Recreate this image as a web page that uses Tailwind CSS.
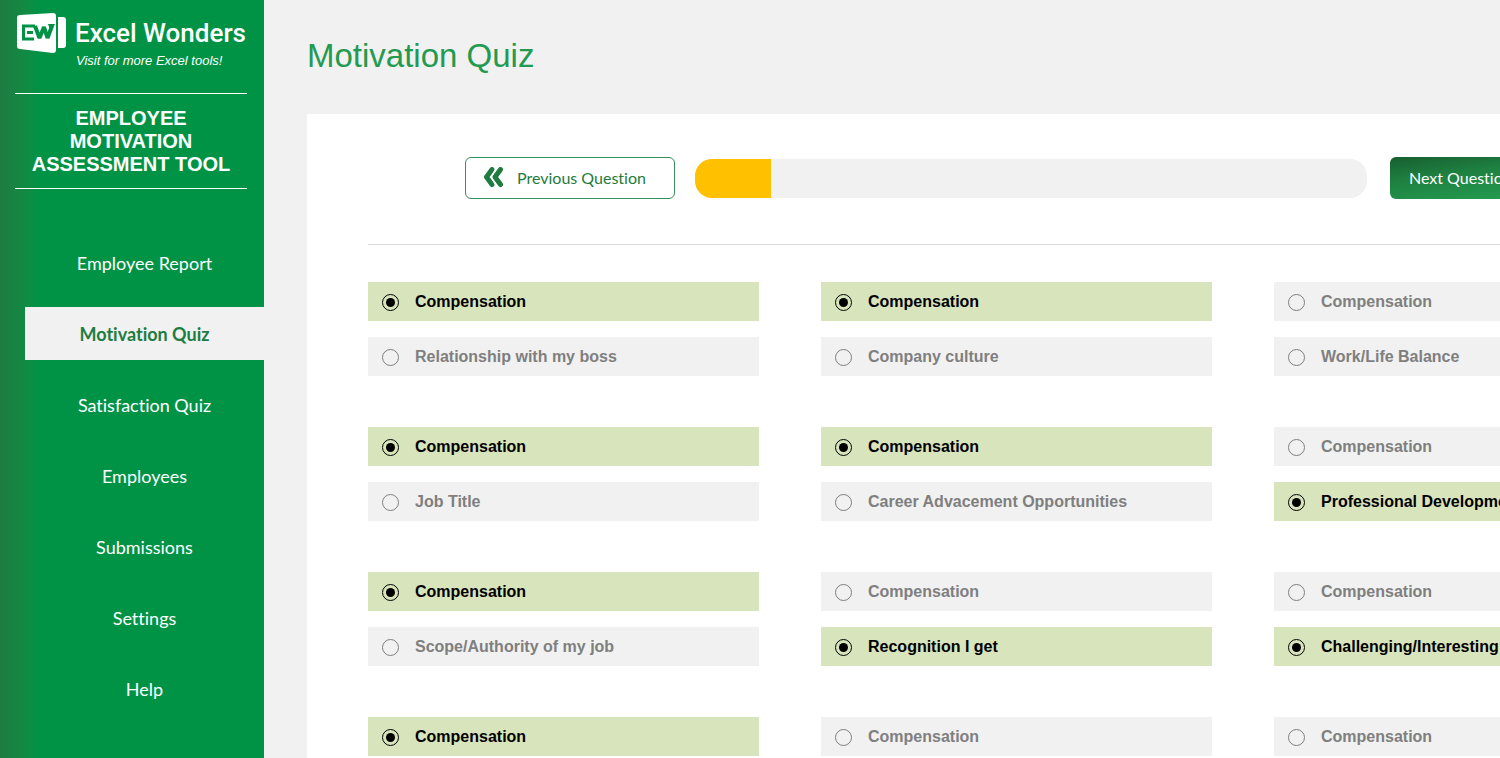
<!DOCTYPE html>
<html lang="en">
<head>
    <meta charset="UTF-8">
    <meta name="viewport" content="width=device-width, initial-scale=1.0">
    <title>Motivation Quiz</title>
    <script src="https://cdn.jsdelivr.net/npm/@tailwindcss/browser@4"></script>
</head>
<body class="flex h-screen overflow-hidden bg-[#f1f1f1] font-['Liberation_Sans',sans-serif]">
    <!-- Sidebar -->
    <aside class="w-[264px] shrink-0 bg-linear-to-r from-[#1e7c40] to-[#009346] to-[40px] text-white">
        <div class="ml-[15px] w-[232px]">
            <a href="#" class="block h-[93px] pt-3">
                <span class="flex h-[42px] items-center gap-2">
                    <svg class="h-[42px] w-[52px] shrink-0" viewBox="0 0 52 42" aria-hidden="true">
                        <path fill="#fff" d="M5 3 38 1Q41 1 41 4V38Q41 41 38 41L5 37Q2 37 2 34V6Q2 3 5 3Z"/>
                        <path fill="#fff" d="M43 5H48Q51 5 51 8V33Q51 36 48 36H43Z"/>
                        <path fill="none" stroke="#009346" stroke-width="3" d="M20 14H8.500V27H19M12 20.500H18"/>
                        <path fill="none" stroke="#009346" stroke-width="4" stroke-linejoin="bevel" d="M20 14 24.500 26 29 15 32.500 26 37 14"/>
                        <path fill="#009346" d="M33 12H40L36 20Z"/>
                    </svg>
                    <span class="font-['Roboto',sans-serif] text-[26px] leading-8 font-medium whitespace-nowrap">Excel Wonders</span>
                </span>
                <span class="block pl-[61px] text-[13px] leading-[14px] whitespace-nowrap italic">Visit for more Excel tools!</span>
            </a>
            <h2 class="border-y border-white px-2 pt-[13px] pb-3 text-center text-[20px] leading-[23px] font-bold">EMPLOYEE MOTIVATION ASSESSMENT TOOL</h2>
        </div>
        <nav class="mt-[47px] ml-[25px] flex flex-col gap-[18px] text-center font-['Lato',sans-serif] text-[18px] leading-[51px] [font-variant-ligatures:none]">
            <a href="#" class="pt-0.5">Employee Report</a>
            <a href="#" class="bg-[#f1f1f1] pt-0.5 font-bold text-[#1e7c40]">Motivation Quiz</a>
            <a href="#" class="pt-0.5">Satisfaction Quiz</a>
            <a href="#" class="pt-0.5">Employees</a>
            <a href="#" class="pt-0.5">Submissions</a>
            <a href="#" class="pt-0.5">Settings</a>
            <a href="#" class="pt-0.5">Help</a>
        </nav>
    </aside>

    <!-- Content -->
    <main class="flex flex-1 flex-col pl-[43px]">
        <h1 class="pt-9 pb-[38px] text-[33px] leading-10 text-[#229a4f]">Motivation Quiz</h1>
        <section class="w-max flex-1 bg-white px-[61px] pt-[43px]">
            <div class="flex items-center border-b border-[#d9d9d9] pr-[65px] pb-[45px] pl-[97px] [font-variant-ligatures:none]">
                <button class="flex h-[42px] w-[210px] items-center rounded-md border border-[#35905a] pl-[17px] font-['Lato',sans-serif] text-[16px] text-[#1e7c40]">
                    <svg class="mr-3 h-[22px] w-[22px]" viewBox="0 0 22 22" fill="none" stroke="#1e7c40" stroke-width="5" stroke-linecap="round" stroke-linejoin="round" aria-hidden="true">
                        <path d="M9 2.500 3.500 10 9 17.500M17.500 2.500 12 10 17.500 17.500"/>
                        <path stroke="#fff" stroke-width="1" d="M13 1 8 10 13 19"/>
                    </svg>
                    Previous Question
                </button>
                <div class="mr-[23px] ml-5 h-[39px] flex-1 overflow-hidden rounded-[17px] bg-[#f1f1f1]" role="progressbar" aria-label="Progress" aria-valuenow="11" aria-valuemin="0" aria-valuemax="100">
                    <div class="h-full w-[76px] bg-[#ffc000]"></div>
                </div>
                <button class="flex h-[42px] w-[210px] items-center rounded-md bg-linear-[172deg] from-[#175f30] via-[#1e8041] via-35% to-[#249a4f] to-80% pl-[19px] font-['Lato',sans-serif] text-[16px] text-white">Next Question</button>
            </div>

            <form id="quiz" class="mt-[37px] grid grid-cols-[repeat(3,391px)] gap-x-[62px] gap-y-[51px]"></form>
        </section>
    </main>

    <script>
        // [first option, second option, index of the chosen one]
        var questions = [
            ['Compensation', 'Relationship with my boss', 0],
            ['Compensation', 'Company culture', 0],
            ['Compensation', 'Work/Life Balance', -1],
            ['Compensation', 'Job Title', 0],
            ['Compensation', 'Career Advacement Opportunities', 0],
            ['Compensation', 'Professional Development', 1],
            ['Compensation', 'Scope/Authority of my job', 0],
            ['Compensation', 'Recognition I get', 1],
            ['Compensation', 'Challenging/Interesting work', 1],
            ['Compensation', '', 0],
            ['Compensation', '', -1],
            ['Compensation', '', -1]
        ];

        document.getElementById('quiz').innerHTML = questions.map(function (q, i) {
            return '<div class="flex flex-col gap-4">' + q.slice(0, 2).filter(Boolean).map(function (text, n) {
                return `
                <label class="flex h-[39px] items-center bg-[#f1f1f1] pt-px pl-3.5 text-[16px] font-bold whitespace-nowrap text-[#7f7f7f] has-checked:bg-[#d8e4bc] has-checked:text-black">
                    <input type="radio" name="q${i}" ${q[2] === n ? 'checked' : ''} class="mr-4 flex size-[17px] shrink-0 appearance-none items-center justify-center rounded-full border border-[#7f7f7f] checked:border-black checked:before:size-[9px] checked:before:rounded-full checked:before:bg-black">
                    ${text}
                </label>`;
            }).join('') + '</div>';
        }).join('');
    </script>
</body>
</html>
